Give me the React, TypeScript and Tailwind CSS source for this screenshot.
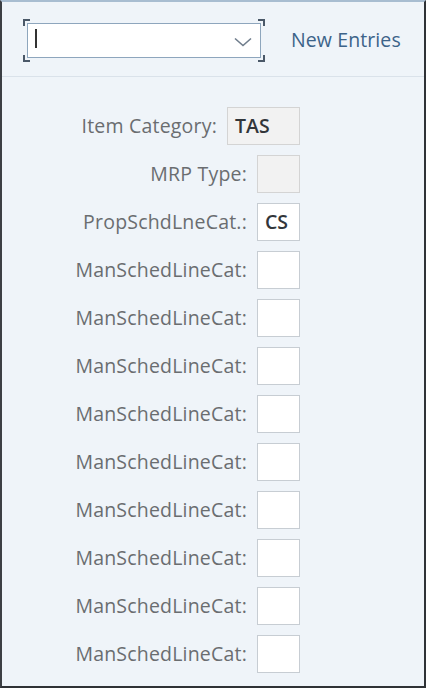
const rows: { label: string; value?: string; readOnly?: boolean; wide?: boolean }[] = [
  { label: 'Item Category:', value: 'TAS', readOnly: true, wide: true },
  { label: 'MRP Type:', readOnly: true },
  { label: 'PropSchdLneCat.:', value: 'CS' },
  ...Array.from({ length: 9 }, () => ({ label: 'ManSchedLineCat:' })),
];

function Corner({ pos }: { pos: string }) {
  return <span className={`absolute w-[7px] h-[7px] border-[#4a5868] ${pos}`} />;
}

export default function App() {
  return (
    <div
      className="w-[426px] h-[688px] bg-[#eff4f9] border-t-2 border-t-[#a8bdd1] border-l-2 border-l-[#3c3f44] border-r-2 border-r-[#2f3236] border-b-2 border-b-[#2f3236] flex flex-col overflow-hidden"
      style={{ fontFamily: '"Open Sans", "Noto Sans", sans-serif' }}
    >
      <div className="h-[75px] flex items-center border-b border-[#dae2ea] shrink-0">
        <div className="relative ml-[25px] mt-[2px]">
          <Corner pos="-left-[4px] -top-[4px] border-l-2 border-t-2" />
          <Corner pos="-right-[4px] -top-[4px] border-r-2 border-t-2" />
          <Corner pos="-left-[4px] -bottom-[4px] border-l-2 border-b-2" />
          <Corner pos="-right-[4px] -bottom-[4px] border-r-2 border-b-2" />
          <div className="w-[234px] h-[35px] bg-white border border-[#8ea6bd] flex items-center pl-[7px] pr-[8px]">
            <span className="w-[1.5px] h-[19px] bg-[#333] -mt-[4px]" />
            <svg className="ml-auto mt-[4px]" width="18" height="10" viewBox="0 0 18 10" fill="none">
              <path d="M1 1.5 L9 8.5 L17 1.5" stroke="#6f7d8c" strokeWidth="1.6" />
            </svg>
          </div>
        </div>
        <span className="ml-[30px] text-[19.5px] tracking-[0.1px] text-[#3c6389] mt-[2px]">New Entries</span>
      </div>
      <div className="pt-[30px] flex flex-col gap-[10px]">
        {rows.map((r, i) => (
          <div key={i} className="flex items-center">
            <span
              className={`text-right text-[19.5px] tracking-[0.2px] text-[#6a6d70] ${r.wide ? 'w-[215px]' : 'w-[245px]'}`}
            >
              {r.label}
            </span>
            <div
              className={`h-[38px] border flex items-center pl-[7px] text-[19.5px] font-semibold text-[#32363a] ${
                r.wide ? 'ml-[10px] w-[73px]' : 'ml-[10px] w-[43px]'
              } ${r.readOnly ? 'bg-[#f2f2f2] border-[#d4d4d4]' : 'bg-white border-[#c7cdd3]'}`}
            >
              {r.value}
            </div>
          </div>
        ))}
      </div>
    </div>
  );
}
